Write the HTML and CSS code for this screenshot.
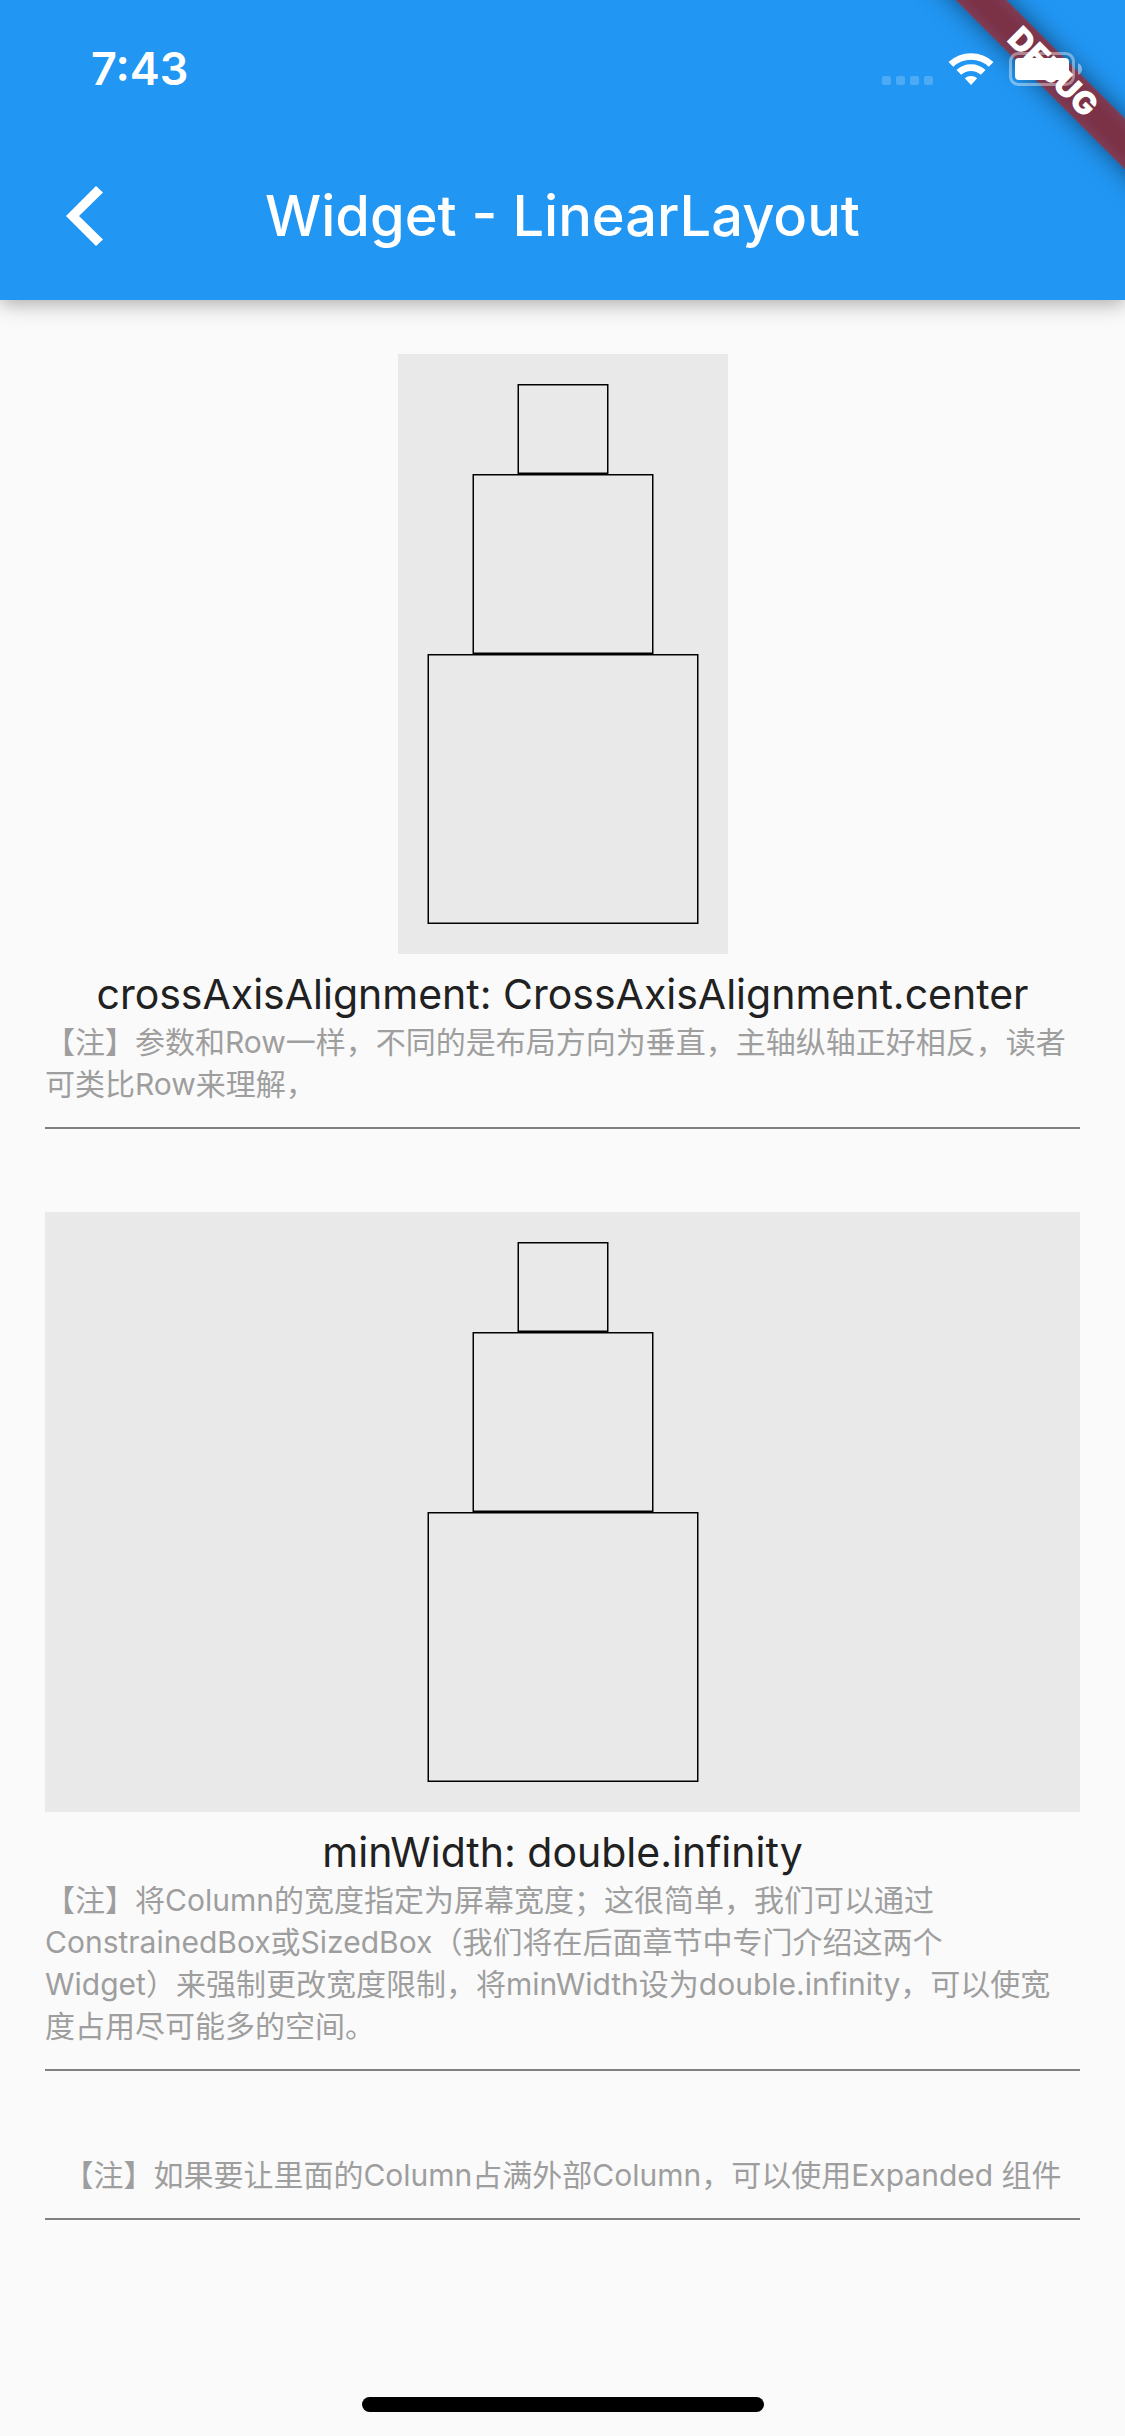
FILE: index.html
```html
<!DOCTYPE html>
<html lang="zh-CN">
<head>
<meta charset="utf-8">
<meta name="viewport" content="width=device-width, initial-scale=1">
<title>Widget - LinearLayout</title>
<link rel="stylesheet" href="styles.css">
</head>
<body>
<header class="header">
  <div class="banner-corner"><div class="banner">DEBUG</div></div>
  <div class="status">
    <time class="clock">7:43</time>
    <div class="indicators">
      <svg class="signal" width="51" height="34" viewBox="0 0 51 34" aria-hidden="true">
        <g fill="#fff" fill-opacity=".2">
          <rect x="0" y="24" width="9" height="9" rx="2"/>
          <rect x="14" y="24" width="9" height="9" rx="2"/>
          <rect x="28" y="24" width="9" height="9" rx="2"/>
          <rect x="42" y="24" width="9" height="9" rx="2"/>
        </g>
      </svg>
      <svg width="46" height="34" viewBox="0 0 46 34" aria-hidden="true">
        <g fill="#fff">
          <path d="M0.5 10 A33 33 0 0 1 45.500 10 L40.800 14.800 A26 26 0 0 0 5.200 14.800 Z"/>
          <path d="M8.500 18 A21.500 21.500 0 0 1 37.500 18 L32.800 22.800 A14.500 14.500 0 0 0 13.200 22.800 Z"/>
          <path d="M16.800 26.200 A10 10 0 0 1 29.200 26.200 L23 33 Z"/>
        </g>
      </svg>
      <svg width="74" height="34" viewBox="0 0 74 34" aria-hidden="true">
        <rect x="1.500" y="1.500" width="63" height="31" rx="8" fill="none" stroke="#fff" stroke-opacity=".4" stroke-width="3"/>
        <rect x="6" y="6" width="54" height="22" rx="4" fill="#fff"/>
        <path d="M69 11 Q73 13 73 17 Q73 21 69 23 Z" fill="#fff" fill-opacity=".45"/>
      </svg>
    </div>
  </div>
  <div class="toolbar">
    <button class="back" type="button" aria-label="Back">
      <svg width="37" height="60" viewBox="0 0 37 60" aria-hidden="true"><path d="M30 0 L37 6.500 L13 30 L37 53.500 L30 60 L0 30 Z" fill="#fff"/></svg>
    </button>
    <h1 class="title">Widget - LinearLayout</h1>
  </div>
</header>
<main class="content">
  <section class="sample">
    <div class="panel">
      <div class="box small"></div>
      <div class="box medium"></div>
      <div class="box large"></div>
    </div>
    <h2 class="caption">crossAxisAlignment: CrossAxisAlignment.center</h2>
    <p class="note">【注】参数和Row一样，不同的是布局方向为垂直，主轴纵轴正好相反，读者可类比Row来理解，</p>
  </section>
  <section class="sample">
    <div class="panel wide">
      <div class="box small"></div>
      <div class="box medium"></div>
      <div class="box large"></div>
    </div>
    <h2 class="caption">minWidth: double.infinity</h2>
    <p class="note">【注】将Column的宽度指定为屏幕宽度；这很简单，我们可以通过ConstrainedBox或SizedBox（我们将在后面章节中专门介绍这两个<br>Widget）来强制更改宽度限制，将minWidth设为double.infinity，可以使宽度占用尽可能多的空间。</p>
  </section>
  <section class="sample">
    <p class="note">【注】如果要让里面的Column占满外部Column，可以使用Expanded 组件</p>
  </section>
</main>
<div class="home-indicator"></div>
</body>
</html>
```
FILE: styles.css
```css
* {
  box-sizing: border-box;
}

body {
  margin: 0;
  min-height: 100vh;
  display: flex;
  flex-direction: column;
  background: #fafafa;
  color: #212121;
  font-family: Inter, "Noto Sans CJK SC", sans-serif;
  text-spacing-trim: space-all;
  text-autospace: no-autospace;
}

.header {
  position: relative;
  background: #2196f3;
  color: #fff;
  box-shadow: 0 3px 20px rgba(0, 0, 0, 0.35);
}

.status {
  position: relative;
  display: flex;
  align-items: center;
  justify-content: space-between;
  height: 132px;
  padding: 6px 42px 0 91px;
}

.clock {
  font-size: 45px;
  font-weight: 600;
  line-height: 54px;
}

.indicators {
  display: flex;
  align-items: center;
  gap: 15px;
}

.toolbar {
  display: grid;
  grid-template-columns: 168px 1fr 168px;
  align-items: center;
  height: 168px;
}

.back {
  display: flex;
  align-items: center;
  justify-content: center;
  height: 168px;
  padding: 0;
  border: 0;
  background: none;
}

.title {
  margin: 0;
  font-size: 56px;
  font-weight: 500;
  line-height: 72px;
  text-align: center;
  white-space: nowrap;
}

/* Debug ribbon across the top right corner */
.banner-corner {
  position: absolute;
  top: 0;
  right: 0;
  width: 240px;
  height: 240px;
  overflow: hidden;
}

.banner {
  position: absolute;
  top: 54px;
  right: -128px;
  width: 400px;
  height: 36px;
  background: linear-gradient(#7d3c55, #7b3146 35%, #7b3146 65%, #7d3c55);
  box-shadow: 0 0 24px rgba(0, 0, 0, 0.5);
  font-size: 32px;
  font-weight: 900;
  line-height: 36px;
  text-align: center;
  transform: rotate(45deg);
}

.content {
  flex: 1;
  padding: 54px 45px;
}

.sample {
  display: flex;
  flex-direction: column;
  align-items: center;
  padding-bottom: 22px;
  border-bottom: 2px solid #808080;
}

.sample + .sample {
  margin-top: 83px;
}

.panel {
  display: flex;
  flex-direction: column;
  align-items: center;
  padding: 30px;
  background: #e9e9e9;
}

.wide {
  width: 100%;
}

.box {
  border: 1px solid #000;
  box-shadow: inset 0 1px #777, inset 0 -1px #777, -1px 0 #777, 1px 0 #777;
}

.small {
  width: 90px;
  height: 90px;
}

.medium {
  width: 180px;
  height: 180px;
}

.large {
  width: 270px;
  height: 270px;
}

.caption {
  margin: 14px 0 1px;
  font-size: 41px;
  font-weight: 400;
  line-height: 52px;
}

.note {
  margin: 0;
  color: #9e9e9e;
  font-size: 30px;
  line-height: 42px;
}

.home-indicator {
  width: 402px;
  height: 15px;
  margin: 0 auto 24px;
  border-radius: 8px;
  background: #000;
}
```
